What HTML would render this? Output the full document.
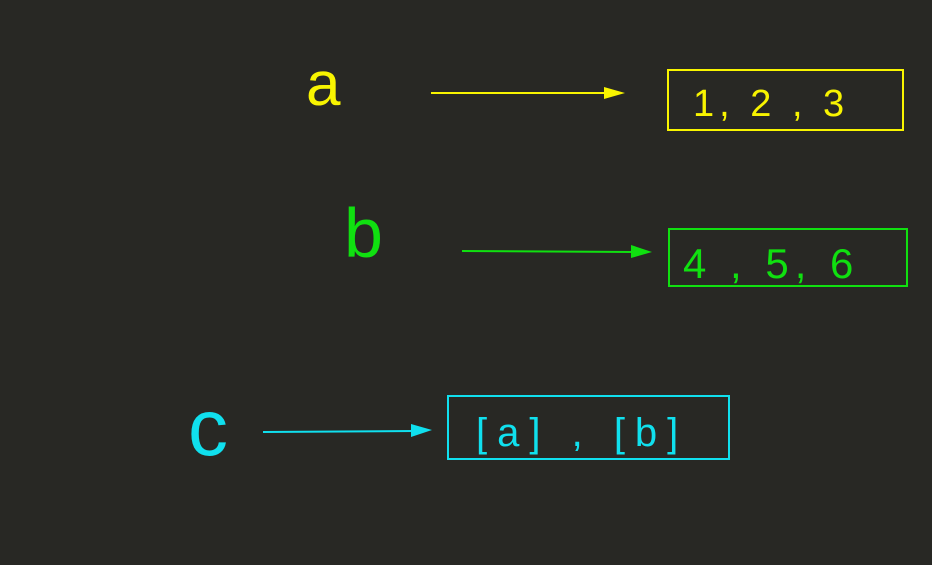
<!DOCTYPE html>
<html><head><meta charset="utf-8"><style>
html,body{margin:0;padding:0;background:#282824;width:932px;height:565px;overflow:hidden}
svg{display:block}
text{font-family:"Liberation Sans",sans-serif}
</style></head><body>
<svg width="932" height="565" viewBox="0 0 932 565" xmlns="http://www.w3.org/2000/svg">
<rect width="932" height="565" fill="#282824"/>
<text x="306" y="105" font-size="62" fill="#f8f400">a</text>
<line x1="431" y1="93" x2="608" y2="93" stroke="#f8f400" stroke-width="2"/>
<polygon points="604,87 625,93 604,99" fill="#f8f400"/>
<rect x="668" y="70" width="235" height="60" fill="none" stroke="#f8f400" stroke-width="2"/>
<text x="693" y="116" font-size="38" fill="#f8f400" letter-spacing="5">1, 2 , 3</text>
<text x="344" y="257" font-size="70" fill="#10e010">b</text>
<line x1="462" y1="251" x2="634" y2="252" stroke="#10e010" stroke-width="2"/>
<polygon points="631,245 652,252 631,258" fill="#10e010"/>
<rect x="669" y="229" width="238" height="57" fill="none" stroke="#10e010" stroke-width="2"/>
<text x="683" y="278" font-size="42" fill="#10e010" letter-spacing="6">4 , 5, 6</text>
<text x="188" y="455" font-size="80" fill="#10e0ee">c</text>
<line x1="263" y1="432" x2="414" y2="431" stroke="#10e0ee" stroke-width="2"/>
<polygon points="411,424 432,430 411,437" fill="#10e0ee"/>
<rect x="448" y="396" width="281" height="63" fill="none" stroke="#10e0ee" stroke-width="2"/>
<text x="476" y="446" font-size="40" fill="#10e0ee" letter-spacing="10">[a] , [b]</text>
</svg>
</body></html>
